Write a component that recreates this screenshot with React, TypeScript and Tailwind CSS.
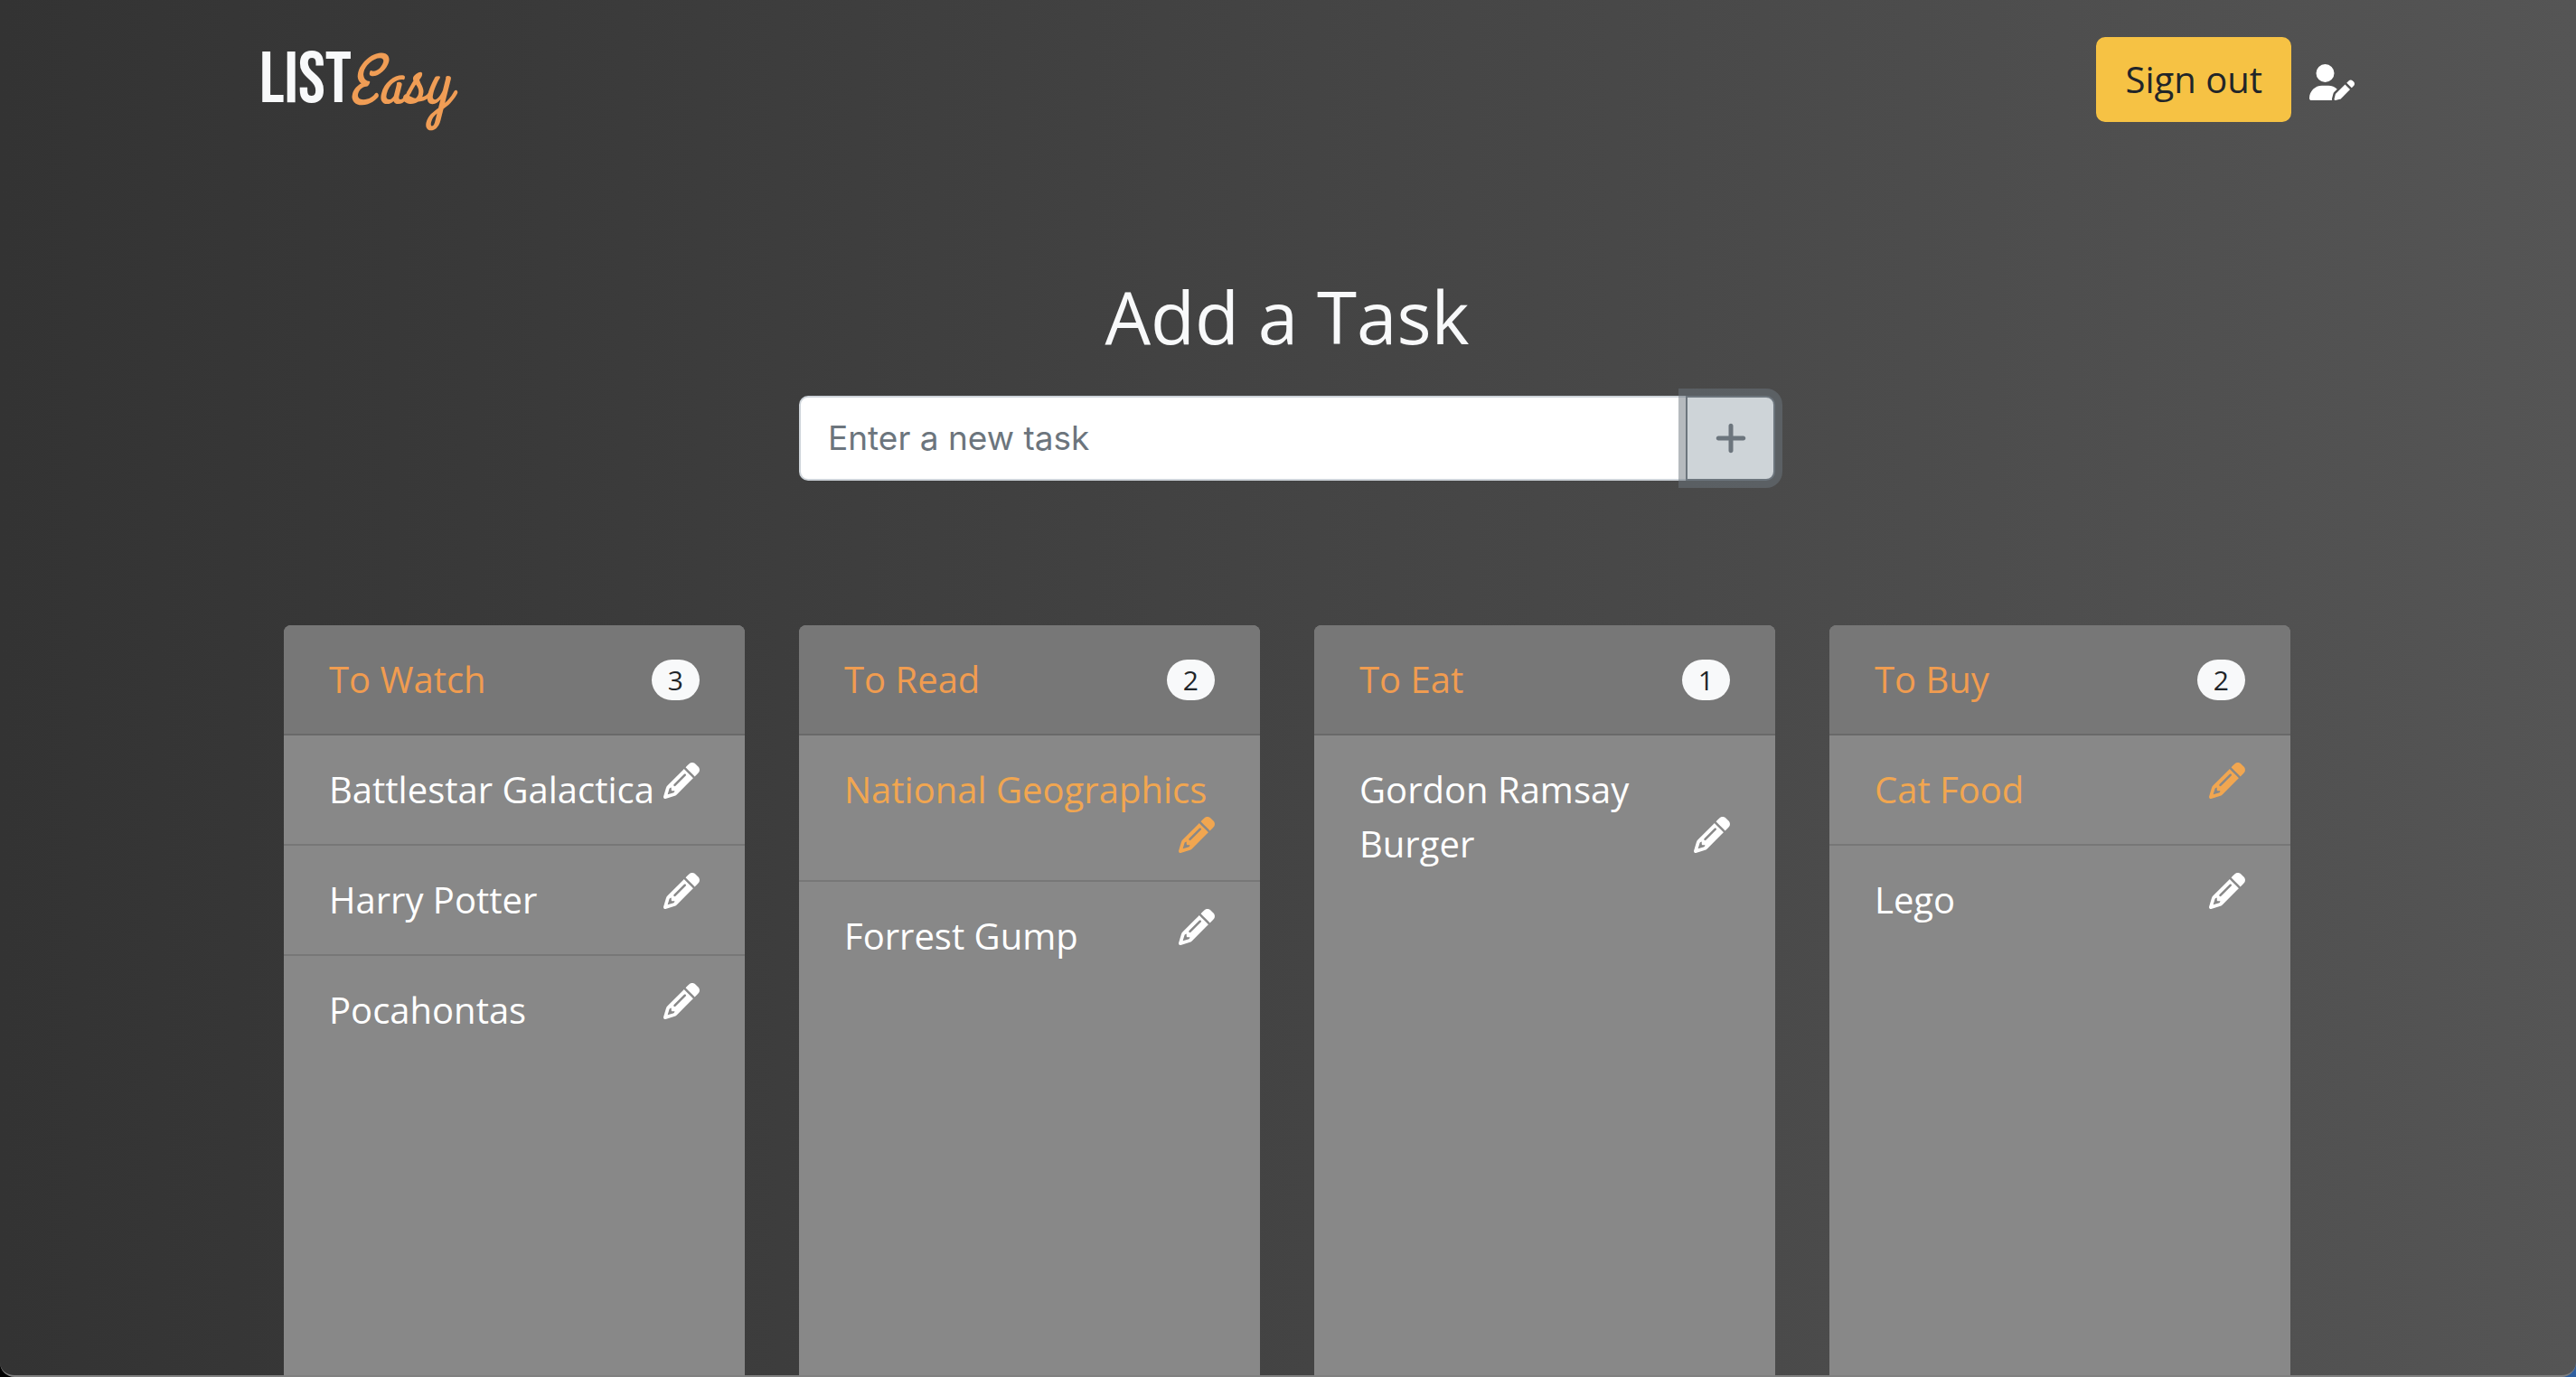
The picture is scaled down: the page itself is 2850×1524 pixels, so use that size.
import { FaPencil, FaPlus, FaUserPen } from "react-icons/fa6";

type Task = { name: string; urgent?: boolean };
type List = { title: string; tasks: Task[] };

const lists: List[] = [
  {
    title: "To Watch",
    tasks: [{ name: "Battlestar Galactica" }, { name: "Harry Potter" }, { name: "Pocahontas" }],
  },
  {
    title: "To Read",
    tasks: [{ name: "National Geographics", urgent: true }, { name: "Forrest Gump" }],
  },
  { title: "To Eat", tasks: [{ name: "Gordon Ramsay Burger" }] },
  { title: "To Buy", tasks: [{ name: "Cat Food", urgent: true }, { name: "Lego" }] },
];

function Logo() {
  return (
    <a href="#" aria-label="LIST Easy" className="flex items-baseline pt-1 leading-none">
      <span className="font-['Bebas_Neue','Roboto_Condensed',sans-serif] text-[80px] text-[#f8f9fa]">
        LIST
      </span>
      <span className="-ml-1 font-['Grand_Hotel','Lato',sans-serif] text-[76px] italic text-[#f09d55]">
        Easy
      </span>
    </a>
  );
}

function Header() {
  return (
    <header className="mx-auto flex h-[135px] w-full max-w-[2362px] items-center justify-between pl-11 pt-[41px]">
      <Logo />
      <div className="flex items-center gap-5">
        <button
          type="button"
          className="rounded-[10px] border-2 border-[#f6c244] bg-[#f6c244] px-[30px] py-[15px] leading-[60px] text-[#212529]"
        >
          Sign out
        </button>
        <a href="#" aria-label="Edit profile" className="pt-1.5 text-white">
          <FaUserPen className="h-10 w-[50px]" />
        </a>
      </div>
    </header>
  );
}

function TaskForm() {
  return (
    <form
      className="col-span-2 col-start-2 flex flex-col gap-10"
      onSubmit={(event) => event.preventDefault()}
    >
      <label htmlFor="task" className="text-center text-[80px] leading-[96px] text-[#f8f9fa]">
        Add a Task
      </label>
      <div className="flex h-[94px]">
        <input
          id="task"
          type="text"
          placeholder="Enter a new task"
          className="min-w-0 flex-1 rounded-l-[10px] border-2 border-[#ced4da] bg-white px-[30px] font-['Inter',sans-serif] text-[37px] text-[#495057] placeholder:text-[#6c757d]"
        />
        <button
          type="submit"
          aria-label="Add task"
          className="-ml-0.5 flex w-[99px] items-center justify-center rounded-r-[10px] border-2 border-[#6c757d] bg-[#ced4d8] text-[#6c757d] shadow-[0_0_0_8px_rgba(108,117,125,0.5)]"
        >
          <FaPlus className="size-10" />
        </button>
      </div>
    </form>
  );
}

function TaskItem({ task }: { task: Task }) {
  return (
    <li
      className={`flow-root border-t-2 border-[#777777] px-[50px] py-[30px] leading-[60px] first:border-[#696969] ${
        task.urgent ? "text-[#f1a650]" : "text-white"
      }`}
    >
      {task.name}
      <button type="button" aria-label={`Edit ${task.name}`} className="float-right">
        <FaPencil className="size-10" />
      </button>
    </li>
  );
}

function ListCard({ list }: { list: List }) {
  return (
    <section className="overflow-hidden rounded-t-lg bg-[#888888]">
      <div className="flex items-center justify-between bg-[#777777] px-[50px] py-[30px]">
        <h2 className="font-medium leading-[60px] text-[#f09c50]">{list.title}</h2>
        <span className="rounded-full bg-[#f8f9fa] px-[18px] text-[30px] leading-[45px] text-[#212529]">
          {list.tasks.length}
        </span>
      </div>
      <ul>
        {list.tasks.map((task) => (
          <TaskItem key={task.name} task={task} />
        ))}
      </ul>
    </section>
  );
}

export default function App() {
  return (
    <div className="bg-linear-to-r from-black to-[#2f5f9f]">
      <div className="flex min-h-screen flex-col overflow-hidden rounded-b-2xl border-b-2 border-[#808080] bg-linear-to-r from-[#333333] to-[#555555] pr-0.5 font-['Open_Sans',sans-serif] text-[40px]">
        <Header />
        <main className="mx-auto grid w-full max-w-[2220px] flex-1 grid-cols-4 grid-rows-[auto_1fr] gap-x-[60px] gap-y-40 pt-[167px]">
          <TaskForm />
          <div className="col-span-4 grid grid-cols-subgrid">
            {lists.map((list) => (
              <ListCard key={list.title} list={list} />
            ))}
          </div>
        </main>
      </div>
    </div>
  );
}
